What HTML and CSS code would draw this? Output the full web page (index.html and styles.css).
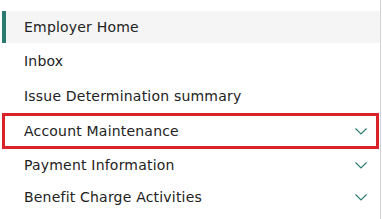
FILE: index.html
```html
<!DOCTYPE html>
<html>
  <head>
    <title>Employer Menu</title>
    <link rel="stylesheet" href="styles.css">
  </head>
  <body>
    <nav class="sidenav">
      <a class="nav-item active" href="#">Employer Home</a>
      <a class="nav-item" href="#">Inbox</a>
      <a class="nav-item" href="#">Issue Determination summary</a>
      <a class="nav-item group highlight" href="#">Account Maintenance
        <svg class="chevron" viewBox="0 0 12 7"><path d="M0.5 0.5 L6 6 L11.5 0.5" /></svg>
      </a>
      <a class="nav-item group" href="#">Payment Information
        <svg class="chevron" viewBox="0 0 12 7"><path d="M0.5 0.5 L6 6 L11.5 0.5" /></svg>
      </a>
      <a class="nav-item group" href="#">Benefit Charge Activities
        <svg class="chevron" viewBox="0 0 12 7"><path d="M0.5 0.5 L6 6 L11.5 0.5" /></svg>
      </a>
    </nav>
  </body>
</html>
```
FILE: styles.css
```css
body {
  margin: 0;
  background: #fff;
  font-family: "DejaVu Sans", sans-serif;
}
.sidenav {
  width: 381px;
  height: 219px;
  padding-top: 11px;
  box-sizing: border-box;
  border-right: 1px solid #d4d4d4;
  display: flex;
  flex-direction: column;
}
.nav-item {
  display: flex;
  align-items: center;
  justify-content: space-between;
  height: 35px;
  padding: 0 12px 0 22px;
  margin-left: 2px;
  margin-right: 1px;
  color: #222;
  font-size: 14px;
  letter-spacing: 0.2px;
  text-decoration: none;
  box-sizing: border-box;
}
.group {
  height: 32px;
}
.active {
  height: 32px;
  background: #f5f5f5;
  border-left: 4px solid #2a7a6f;
  padding-left: 18px;
  margin-right: 0;
}
.highlight {
  height: 36px;
  border: 3px solid #d9232a;
  padding-left: 19px;
  padding-right: 9px;
}
.chevron {
  width: 12px;
  height: 7px;
  fill: none;
  stroke: #2a7a6f;
  stroke-width: 1.1;
}
```
